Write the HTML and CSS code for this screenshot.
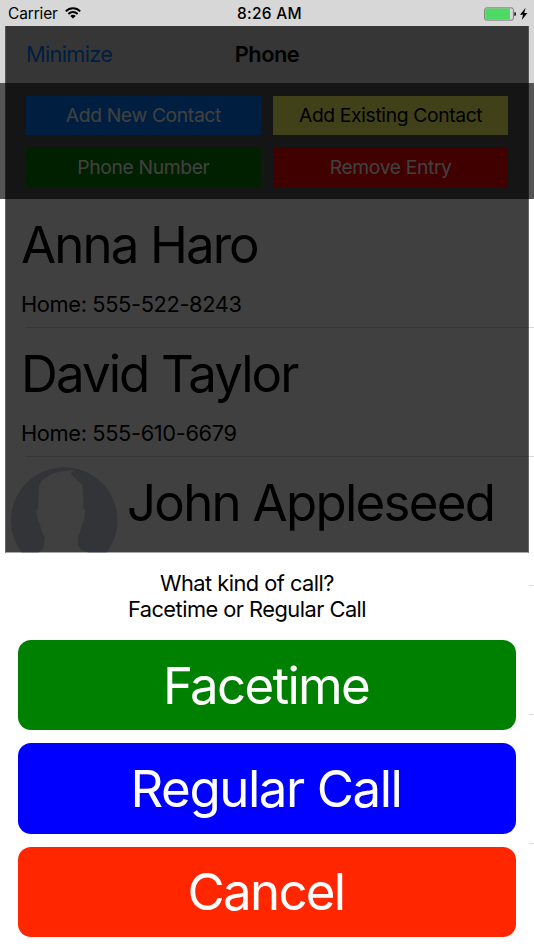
FILE: index.html
```html
<!DOCTYPE html>
<html lang="en">
<head>
    <meta charset="UTF-8">
    <meta name="viewport" content="width=device-width, initial-scale=1.0">
    <title>Phone</title>
    <link rel="stylesheet" href="styles.css">
</head>
<body>

<div class="screen">
    <header class="status-bar">
        <div class="carrier">
            <span>Carrier</span>
            <svg class="wifi" width="16" height="12" viewBox="0 0 16 12">
                <g fill="none" stroke="#000" stroke-width="1.9">
                    <path d="M0.8 4.3 C4.8 0.2 11.2 0.2 15.2 4.3"/>
                    <path d="M3.4 7 C6 4.4 10 4.4 12.6 7"/>
                </g>
                <path d="M5.3 8.9 C6.8 7.5 9.2 7.5 10.7 8.9 L8 11.6 Z"/>
            </svg>
        </div>
        <div class="clock">8:26 AM</div>
        <div class="power">
            <svg width="44" height="14" viewBox="0 0 44 14">
                <rect x="0.6" y="0.9" width="28.8" height="12.2" rx="1.8" fill="#d7d7d7" stroke="#7b7b7b"/>
                <rect x="1.3" y="1.6" width="24.7" height="10.8" rx="0.8" fill="#4cd964"/>
                <path d="M30.4 5 Q32 5.2 32 7 Q32 8.8 30.4 9 Z"/>
                <path d="M41.6 0.8 L36 7.8 H39 L37.8 13 L43.4 6 H40.2 Z"/>
            </svg>
        </div>
    </header>

    <nav class="nav-bar">
        <a class="minimize">Minimize</a>
        <h1 class="nav-title">Phone</h1>
    </nav>

    <div class="toolbar">
        <div class="tool add-new">Add New Contact</div>
        <div class="tool add-existing">Add Existing Contact</div>
        <div class="tool number">Phone Number</div>
        <div class="tool remove">Remove Entry</div>
    </div>

    <ul class="contacts">
        <li class="contact">
            <div class="name">Anna Haro</div>
            <div class="phone">Home: 555-522-8243</div>
        </li>
        <li class="contact">
            <div class="name">David Taylor</div>
            <div class="phone">Home: 555-610-6679</div>
        </li>
        <li class="contact with-photo">
            <svg class="photo" width="107" height="107" viewBox="0 0 107 107">
                <circle cx="53.2" cy="53.5" r="53.3" fill="#cccfe0"/>
                <path fill="#fff" d="M27 42 L28 20 C30 11 42 4 63 3 L59.5 7 L71.5 18 L72.5 42 L74 43 C74 50 73 54 71 57 C70 62 69 67 66.5 70 L67 79 C72 86 86 88 92 91 C72 112 35 112 15 91 C24 87 31 86 33 79 L34 70 C31 67 30 62 29 57 C27 54 26 49 25.5 43 Z"/>
            </svg>
            <div class="name">John Appleseed</div>
        </li>
        <li class="contact"></li>
        <li class="contact"></li>
        <li class="contact"></li>
    </ul>

    <!-- call type picker -->
    <div class="modal">
        <div class="backdrop"></div>
        <div class="sheet">
            <p class="question">What kind of call?<br>Facetime or Regular Call</p>
            <div class="call-btn facetime">Facetime</div>
            <div class="call-btn regular">Regular Call</div>
            <div class="call-btn cancel">Cancel</div>
        </div>
    </div>
</div>

</body>
</html>
```
FILE: styles.css
```css
body {
    margin: 0;
    font-family: Inter, "Liberation Sans", sans-serif;
    color: #000;
    background-color: #fff;
}
.screen {
    position: relative;
    width: 534px;
    height: 950px;
    overflow: hidden;
}
.status-bar {
    display: grid;
    grid-template-columns: 1fr auto 1fr;
    align-items: center;
    box-sizing: border-box;
    height: 26px;
    padding: 1px 6px 0 8px;
    background-color: #d7d7d7;
    font-size: 15.5px;
    white-space: nowrap;
}
.carrier {
    display: flex;
    align-items: center;
    gap: 7px;
    letter-spacing: -0.15px;
}
.wifi {
    margin-top: -2px;
}
.clock {
    padding-left: 3px;
    font-weight: 500;
    letter-spacing: 0.3px;
}
.power {
    display: flex;
    justify-content: flex-end;
}
.nav-bar {
    display: grid;
    grid-template-columns: 1fr auto 1fr;
    align-items: center;
    box-sizing: border-box;
    height: 57px;
    padding: 0 26px 1px;
    background-color: #d7d7d7;
    font-size: 21.8px;
}
.minimize {
    color: #007aff;
    letter-spacing: -0.7px;
}
.nav-title {
    margin: 0;
    font-size: 21.8px;
    font-weight: 600;
    letter-spacing: -0.5px;
}
.toolbar {
    display: grid;
    grid-template-columns: 1fr 1fr;
    grid-template-rows: 1fr 1fr;
    gap: 12.5px;
    box-sizing: border-box;
    height: 116px;
    padding: 12.5px 26px;
    background-color: #555;
}
.tool {
    display: flex;
    align-items: center;
    justify-content: center;
    color: #fff;
    font-size: 19.3px;
    letter-spacing: -0.36px;
    white-space: nowrap;
}
.add-new { background-color: #007aff; }
.add-existing { background-color: #ffff66; color: #000; }
.number { background-color: #008000; }
.remove { background-color: #f00; }
.contacts {
    margin: 0;
    padding: 0;
    list-style: none;
}
.contact {
    box-sizing: border-box;
    height: 129px;
    padding: 15px 0 0 21px;
    background: linear-gradient(#dadada, #dadada) 26px 100% / 100% 1px no-repeat;
}
.name {
    font-size: 51px;
    line-height: 62px;
    letter-spacing: -1.9px;
    white-space: nowrap;
}
.phone {
    margin-top: 15px;
    font-size: 21.8px;
    line-height: 27px;
    letter-spacing: -0.36px;
}
.with-photo {
    display: flex;
    gap: 9px;
    padding: 10px 0 0 11px;
}
.with-photo .name {
    margin-top: 5px;
    letter-spacing: -1.75px;
}
.modal {
    position: absolute;
    top: 26px;
    left: 5px;
    width: 524px;
    height: 924px;
    display: flex;
    flex-direction: column;
}
.backdrop {
    height: 526px;
    border: 1px solid rgba(0, 0, 0, 0.6);
    border-top: 0;
    border-bottom-color: rgba(0, 0, 0, 0.35);
    background-color: rgba(0, 0, 0, 0.75);
    background-clip: padding-box;
}
.sheet {
    flex: 1;
    display: flex;
    flex-direction: column;
    gap: 13px;
    padding: 17px 13px 0;
    background-color: #fff;
}
.question {
    width: 458px;
    margin: 0 0 5px;
    font-size: 21.8px;
    line-height: 26px;
    letter-spacing: -0.52px;
    text-align: center;
}
.call-btn {
    display: flex;
    align-items: center;
    justify-content: center;
    box-sizing: border-box;
    height: 90.3px;
    padding-right: 2px;
    border-radius: 13px;
    color: #fff;
    font-size: 51px;
    letter-spacing: -1.7px;
}
.facetime { background-color: #008000; }
.regular { background-color: #00f; letter-spacing: -1.45px; }
.cancel { background-color: #ff2600; }
```
